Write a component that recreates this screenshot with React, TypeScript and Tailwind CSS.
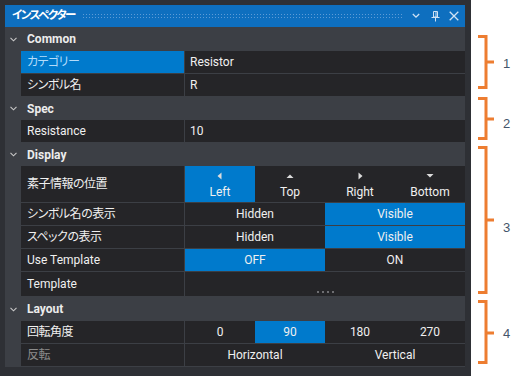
import React from "react";

const font = "[font-family:Roboto,'Noto_Sans_CJK_JP',sans-serif] [font-feature-settings:'palt']";

const isJa = (s: string) => /[^\x00-\x7F]/.test(s);

function Chevron() {
  return (
    <svg width="7" height="5" viewBox="0 0 7 5" className="text-[#c8c8c8]">
      <path d="M0.5 0.8 L3.5 3.8 L6.5 0.8" fill="none" stroke="currentColor" strokeWidth="1.1" />
    </svg>
  );
}

function Header({ title, tall }: { title: string; tall?: boolean }) {
  return (
    <div className={`flex items-center bg-[#3c3f45] ${tall ? "h-[24px]" : "h-[23px]"}`}>
      <div className="flex w-[22px] items-center pl-[5px]">
        <Chevron />
      </div>
      <span className="text-[12px] font-bold text-[#ececec]">{title}</span>
    </div>
  );
}

function Row({
  label,
  children,
  h = "h-[22px]",
  selected,
  disabled,
}: {
  label: string;
  children?: React.ReactNode;
  h?: string;
  selected?: boolean;
  disabled?: boolean;
}) {
  return (
    <div className={`mb-[1px] flex ${h}`}>
      <div className="w-[16px]" />
      <div
        className={`flex w-[163px] items-center pl-[6px] text-[12px] ${isJa(label) ? "tracking-[-0.5px]" : ""} ${
          selected ? "bg-[#007acc] text-[#b4dcfa]" : disabled ? "bg-[#252528] text-[#8c8c8c]" : "bg-[#252528] text-[#f0f0f0]"
        }`}
      >
        {label}
      </div>
      <div className="w-[1px]" />
      <div className="flex flex-1 bg-[#252528]">{children}</div>
    </div>
  );
}

function Seg({ items, active }: { items: string[]; active: number }) {
  return (
    <div className="flex flex-1">
      {items.map((t, i) => (
        <div
          key={t}
          className={`flex flex-1 items-center justify-center text-[12px] text-[#f0f0f0] ${i === active ? "bg-[#007acc]" : ""}`}
        >
          {t}
        </div>
      ))}
    </div>
  );
}

function Tri({ dir }: { dir: "left" | "up" | "right" | "down" }) {
  const pts = {
    left: "5.5,0.5 5.5,7.5 1.5,4",
    up: "0.5,6 7.5,6 4,2.5",
    right: "2.5,0.5 2.5,7.5 6.5,4",
    down: "0.5,2 7.5,2 4,5.5",
  }[dir];
  return (
    <svg width="8" height="8" viewBox="0 0 8 8">
      <polygon points={pts} fill="#dcdcdc" />
    </svg>
  );
}

function PosSeg() {
  const items: { t: string; d: "left" | "up" | "right" | "down" }[] = [
    { t: "Left", d: "left" },
    { t: "Top", d: "up" },
    { t: "Right", d: "right" },
    { t: "Bottom", d: "down" },
  ];
  return (
    <div className="flex flex-1">
      {items.map((it, i) => (
        <div
          key={it.t}
          className={`flex flex-1 flex-col items-center pt-[6px] text-[12px] leading-[16px] text-[#f0f0f0] ${i === 0 ? "bg-[#007acc]" : ""}`}
        >
          <Tri dir={it.d} />
          <span className="mt-[4px]">{it.t}</span>
        </div>
      ))}
    </div>
  );
}

function Braces() {
  const braces = [
    { y1: 36.5, y2: 87.5, m: 62, n: "1", ny: 63 },
    { y1: 98.5, y2: 138.5, m: 119, n: "2", ny: 123 },
    { y1: 147.5, y2: 292.5, m: 220, n: "3", ny: 227 },
    { y1: 301.5, y2: 362.5, m: 333, n: "4", ny: 333 },
  ];
  return (
    <svg width="51" height="376" viewBox="0 0 51 376">
      {braces.map((b) => (
        <g key={b.n}>
          <path
            d={`M7 ${b.y1} H15 V${b.y2} H7 M15 ${b.m} H23`}
            fill="none"
            stroke="#ed7d31"
            strokeWidth="3"
          />
          <text x="32" y={b.ny + 5} fontSize="13" fill="#44546a" fontFamily="'Liberation Sans', sans-serif">
            {b.n}
          </text>
        </g>
      ))}
    </svg>
  );
}

export default function App() {
  return (
    <div className={`flex h-[376px] w-[522px] bg-white ${font}`}>
      <div className="flex h-full w-[471px] flex-col bg-[#2e3035] pl-[5px] pr-[6px] pt-[5px]">
        {/* title bar */}
        <div className="flex h-[22px] items-center bg-[#0e6fbf] pl-[7px] pr-[6px]">
          <span className="text-[11.5px] font-bold tracking-[-1.5px] text-white">インスペクター</span>
          <div className="ml-[7px] mr-[10px] h-[6px] flex-1 bg-[radial-gradient(#5c9bd6_0.7px,transparent_0.9px)] bg-[length:3px_3px]" />
          <svg width="8" height="6" viewBox="0 0 8 6" className="mr-[11px]">
            <path d="M0.8 1 L4 4.2 L7.2 1" fill="none" stroke="#cfe2f4" strokeWidth="1.3" />
          </svg>
          <svg width="9" height="11" viewBox="0 0 9 11" className="mr-[9px]">
            <path d="M2.5 0.5 H6.5 V6 H2.5 Z M0.5 6.5 H8.5 M4.5 6.5 V10.5 M5 1 V6" fill="none" stroke="#cfe2f4" strokeWidth="1" />
          </svg>
          <svg width="10" height="10" viewBox="0 0 10 10">
            <path d="M0.7 0.7 L9.3 9.3 M9.3 0.7 L0.7 9.3" fill="none" stroke="#cfe2f4" strokeWidth="1.3" />
          </svg>
        </div>

        {/* property grid */}
        <div className="flex flex-col bg-[#3c3f45]">
          <Header title="Common" tall />
          <Row label="カテゴリー" selected>
            <span className="flex items-center pl-[5px] text-[12px] text-[#f0f0f0]">Resistor</span>
          </Row>
          <Row label="シンボル名">
            <span className="flex items-center pl-[5px] text-[12px] text-[#f0f0f0]">R</span>
          </Row>
          <Header title="Spec" />
          <Row label="Resistance">
            <span className="flex items-center pl-[5px] text-[12px] text-[#f0f0f0]">10</span>
          </Row>
          <Header title="Display" />
          <Row label="素子情報の位置" h="h-[36px]">
            <PosSeg />
          </Row>
          <Row label="シンボル名の表示">
            <Seg items={["Hidden", "Visible"]} active={1} />
          </Row>
          <Row label="スペックの表示">
            <Seg items={["Hidden", "Visible"]} active={1} />
          </Row>
          <Row label="Use Template">
            <Seg items={["OFF", "ON"]} active={0} />
          </Row>
          <Row label="Template" h="h-[24px]">
            <div className="flex flex-1 items-end justify-center gap-[3px] pb-[3px]">
              <span className="h-[2px] w-[2px] bg-[#6e6e72]" />
              <span className="h-[2px] w-[2px] bg-[#6e6e72]" />
              <span className="h-[2px] w-[2px] bg-[#6e6e72]" />
              <span className="h-[2px] w-[2px] bg-[#6e6e72]" />
            </div>
          </Row>
          <Header title="Layout" tall />
          <Row label="回転角度">
            <Seg items={["0", "90", "180", "270"]} active={1} />
          </Row>
          <Row label="反転" disabled>
            <Seg items={["Horizontal", "Vertical"]} active={-1} />
          </Row>
        </div>
      </div>
      <div className="flex-1">
        <Braces />
      </div>
    </div>
  );
}
